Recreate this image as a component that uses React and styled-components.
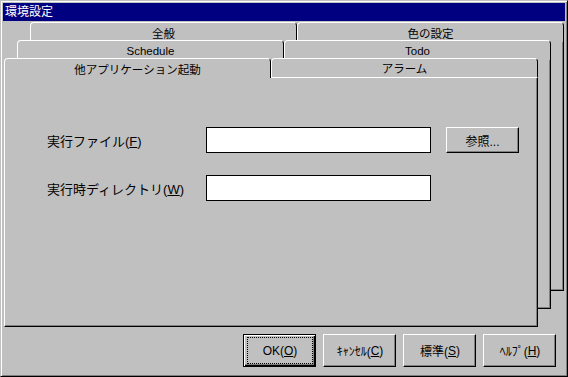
import React from 'react';
import styled, { createGlobalStyle } from 'styled-components';

const GlobalStyle = createGlobalStyle`
    html, body {
        margin: 0;
        padding: 0;
        background: #c0c0c0;
    }
    body {
        font-family: "Liberation Sans", "Noto Sans CJK JP", sans-serif;
        -webkit-font-smoothing: none;
    }
`;

const Window = styled.div`
    width: 568px;
    height: 377px;
    box-sizing: border-box;
    background: #c0c0c0;
    border: 1px solid;
    border-color: #c0c0c0 #000 #000 #c0c0c0;
    box-shadow: inset 1px 1px #fff, inset -1px -1px #808080;
    padding: 2px;
    display: flex;
    flex-direction: column;
`;

const TitleBar = styled.div`
    height: 18px;
    background: #000080;
    color: #fff;
    font-size: 12px;
    line-height: 18px;
    padding-left: 2px;
`;

const Stack = styled.div`
    display: grid;
    grid-template-areas: 'sheet';
    margin: 1px 0 0 1px;
`;

const Sheet = styled.div`
    grid-area: sheet;
    width: 534px;
    margin-left: ${(p) => p.$depth * 13}px;
    margin-top: ${(p) => (2 - p.$depth) * 18}px;
    display: flex;
    flex-direction: column;
`;

const TabRow = styled.div`
    display: flex;
    height: 20px;
`;

const Tab = styled.div`
    flex: 1;
    box-sizing: border-box;
    display: flex;
    align-items: center;
    justify-content: center;
    background: #c0c0c0;
    border-top: 1px solid #fff;
    border-left: 1px solid #fff;
    border-right: 1px solid #000;
    border-bottom: ${(p) => (p.$line ? '1px solid #fff' : 'none')};
    border-radius: 4px 4px 0 0;
    font-size: 11.5px;
    color: #000;
`;

const Body = styled.div`
    height: 249px;
    box-sizing: border-box;
    background: #c0c0c0;
    border-left: ${(p) => (p.$front ? '1px solid #fff' : 'none')};
    border-right: 1px solid #000;
    border-bottom: 1px solid #000;
    box-shadow: inset -1px -1px #808080;
    padding: 49px 0 0 42px;
`;

const Form = styled.div`
    display: grid;
    grid-template-columns: 159px 225px 73px;
    grid-auto-rows: 26px;
    row-gap: 22px;
    column-gap: 0;
    align-items: center;
`;

const Label = styled.div`
    font-size: 13px;
    color: #000;
`;

const Field = styled.div`
    height: 26px;
    box-sizing: border-box;
    background: #fff;
    border: 1px solid #000;
`;

const Browse = styled.div`
    margin-left: 15px;
    width: 73px;
    height: 26px;
    box-sizing: border-box;
    background: #c0c0c0;
    border: 1px solid;
    border-color: #fff #000 #000 #fff;
    box-shadow: inset -1px -1px #808080;
    display: flex;
    align-items: center;
    justify-content: center;
    font-size: 12px;
`;

const ButtonRow = styled.div`
    display: flex;
    justify-content: flex-end;
    gap: 7px;
    margin-top: 7px;
    padding-right: 9px;
`;

const Button = styled.div`
    width: 73px;
    height: 33px;
    box-sizing: border-box;
    background: #c0c0c0;
    border: 1px solid;
    border-color: ${(p) => (p.$default ? '#000' : '#fff #000 #000 #fff')};
    box-shadow: ${(p) =>
        p.$default
            ? 'inset 1px 1px #fff, inset -1px -1px #000, inset -2px -2px #808080'
            : 'inset -1px -1px #808080'};
    padding: 2px 2px 2px 3px;
    display: flex;
    font-size: 12px;
    color: #000;
`;

const Caption = styled.div`
    flex: 1;
    display: flex;
    align-items: center;
    justify-content: center;
    border: 1px ${(p) => (p.$focus ? 'dotted #000' : 'solid transparent')};
`;

const U = styled.span`
    text-decoration: underline;
`;

const App = () => {
    return (
        <Window>
            <GlobalStyle />
            <TitleBar>環境設定</TitleBar>
            <Stack>
                <Sheet $depth={2}>
                    <TabRow>
                        <Tab>全般</Tab>
                        <Tab>色の設定</Tab>
                    </TabRow>
                    <Body />
                </Sheet>
                <Sheet $depth={1}>
                    <TabRow>
                        <Tab>Schedule</Tab>
                        <Tab>Todo</Tab>
                    </TabRow>
                    <Body />
                </Sheet>
                <Sheet $depth={0}>
                    <TabRow>
                        <Tab>他アプリケーション起動</Tab>
                        <Tab $line>アラーム</Tab>
                    </TabRow>
                    <Body $front>
                        <Form>
                            <Label>実行ファイル(<U>F</U>)</Label>
                            <Field />
                            <Browse>参照...</Browse>
                            <Label>実行時ディレクトリ(<U>W</U>)</Label>
                            <Field />
                        </Form>
                    </Body>
                </Sheet>
            </Stack>
            <ButtonRow>
                <Button $default>
                    <Caption $focus>OK(<U>O</U>)</Caption>
                </Button>
                <Button>
                    <Caption>ｷｬﾝｾﾙ(<U>C</U>)</Caption>
                </Button>
                <Button>
                    <Caption>標準(<U>S</U>)</Caption>
                </Button>
                <Button>
                    <Caption>ﾍﾙﾌﾟ(<U>H</U>)</Caption>
                </Button>
            </ButtonRow>
        </Window>
    );
};

export default App;
